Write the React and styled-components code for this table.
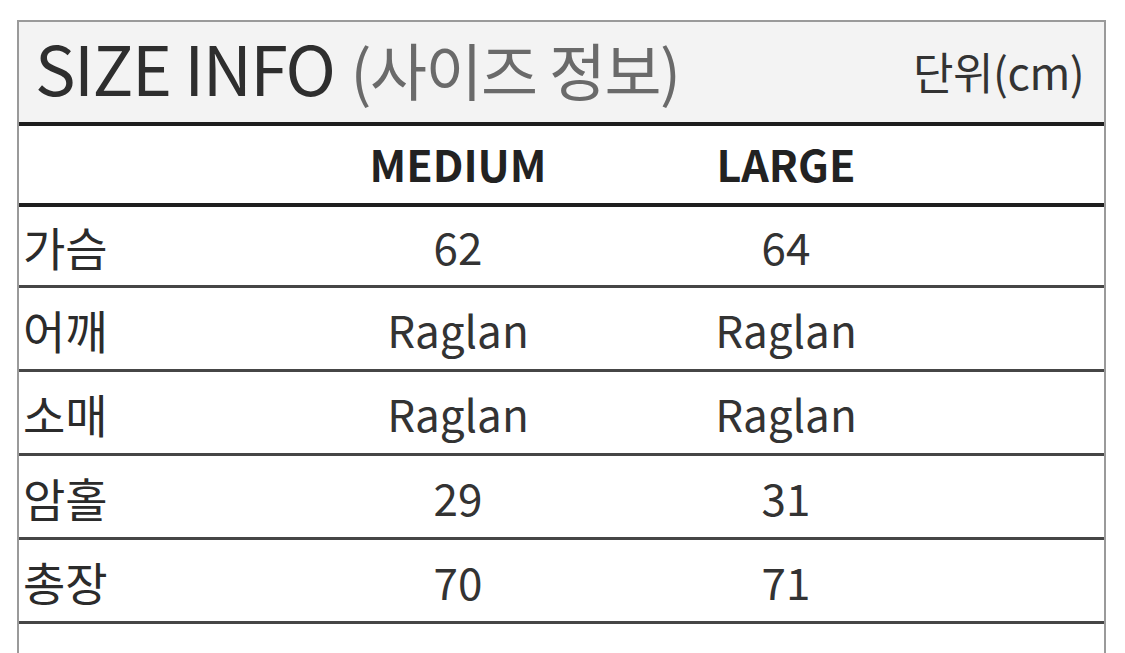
import React from 'react'
import styled, { createGlobalStyle } from 'styled-components'

const GlobalStyle = createGlobalStyle`
    html, body {
        margin: 0;
        padding: 0;
        background: #ffffff;
    }
    body {
        font-family: "Noto Sans CJK KR", "Noto Sans", sans-serif;
        color: #2b2b2b;
    }
`

const Page = styled.div`
    width: 1125px;
    height: 653px;
    overflow: hidden;
    padding: 20px 0 0 17px;
    box-sizing: border-box;
`

const Table = styled.div`
    width: 1089px;
    border: 2px solid #9a9a9a;
    border-bottom: none;
    box-sizing: border-box;
`

const TitleBar = styled.div`
    height: 104px;
    background: #f3f3f3;
    display: flex;
    align-items: center;
    justify-content: space-between;
    padding: 0 20px 10px 16px;
    box-sizing: border-box;
    border-bottom: 4px solid #1e1e1e;
`

const Title = styled.h1`
    margin: 0;
    font-weight: 400;
    font-size: 68px;
    letter-spacing: -1.5px;
    color: #2e2e2e;
    line-height: 1;
`

const TitleSub = styled.span`
    font-size: 62px;
    color: #6a6a6a;
    margin-left: 16px;
`

const Unit = styled.span`
    font-size: 44px;
    color: #333;
    margin-top: 8px;
    letter-spacing: -0.5px;
`

const Row = styled.div`
    display: grid;
    grid-template-columns: 275px 328px 328px 1fr;
    align-items: center;
    height: ${p => p.$height}px;
    border-bottom: ${p => p.$line};
`

const Label = styled.div`
    font-size: 46px;
    padding-left: 4px;
    color: #2b2b2b;
`

const Cell = styled.div`
    text-align: center;
    font-size: ${p => (p.$bold ? 43 : 44)}px;
    font-weight: ${p => (p.$bold ? 700 : 400)};
    color: ${p => (p.$bold ? '#222' : '#333')};
    padding-bottom: ${p => (p.$bold ? 4 : 0)}px;
`

const rows = [
    ['가슴', '62', '64'],
    ['어깨', 'Raglan', 'Raglan'],
    ['소매', 'Raglan', 'Raglan'],
    ['암홀', '29', '31'],
    ['총장', '70', '71'],
]

export default function App() {
    return (
        <Page>
            <GlobalStyle />
            <Table>
                <TitleBar>
                    <Title>
                        SIZE INFO<TitleSub>(사이즈 정보)</TitleSub>
                    </Title>
                    <Unit>단위(cm)</Unit>
                </TitleBar>
                <Row $height={77} $line="4px solid #1e1e1e">
                    <Label />
                    <Cell $bold>MEDIUM</Cell>
                    <Cell $bold>LARGE</Cell>
                </Row>
                {rows.map(([label, m, l], i) => (
                    <Row key={label} $height={i === 0 ? 78 : 81} $line="3px solid #464646">
                        <Label>{label}</Label>
                        <Cell>{m}</Cell>
                        <Cell>{l}</Cell>
                    </Row>
                ))}
                <Row $height={40} $line="none" />
            </Table>
        </Page>
    )
}
